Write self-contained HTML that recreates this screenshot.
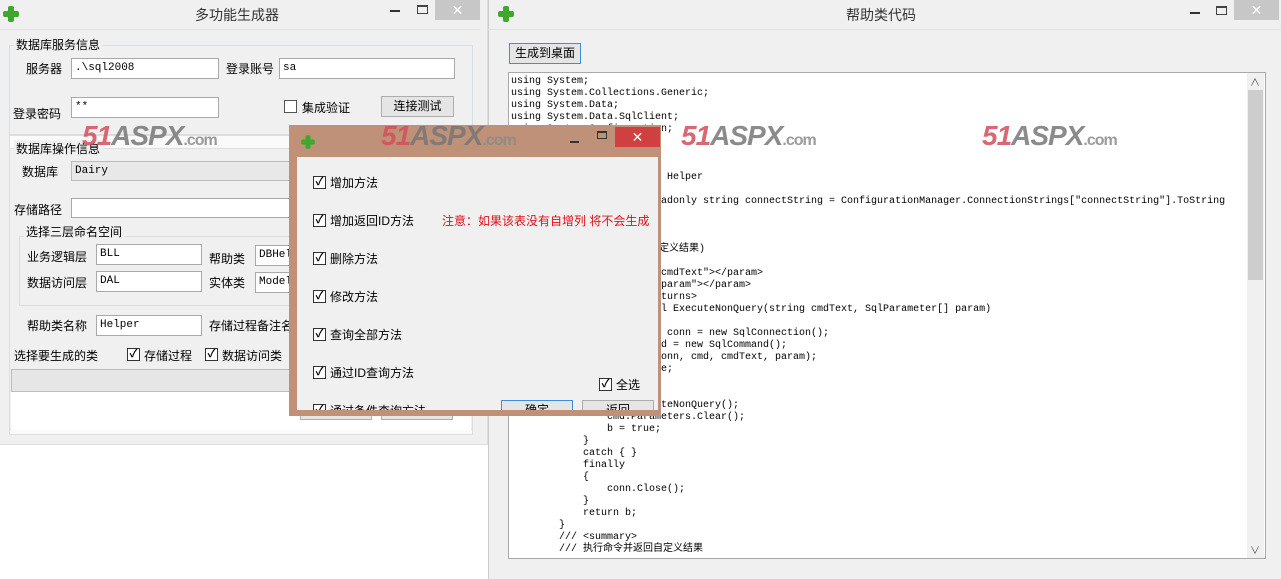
<!DOCTYPE html>
<html><head><meta charset="utf-8"><style>
*{margin:0;padding:0;box-sizing:border-box}
body{width:1281px;height:579px;overflow:hidden;background:#fff;position:relative;font-family:"Liberation Sans","Noto Sans CJK SC",sans-serif;font-size:12px;color:#000}
.a{position:absolute}
.tb{position:absolute;background:#fff;border:1px solid #a9a9a9;font-family:"Liberation Mono","Noto Sans CJK SC",monospace;font-size:11px;padding:0 3px;line-height:18px}
.btn{position:absolute;background:#e5e5e5;border:1px solid #adadad;text-align:center;line-height:18px}
.cb{position:absolute;width:13px;height:13px;border:1px solid #333;background:#fff;font-size:11px;line-height:11px;text-align:center;font-weight:bold}
.gb{position:absolute;border:1px solid #d5dfe5}
.gl{position:absolute;background:#f0f0f0;padding:0 2px}
.plus{position:absolute;width:16px;height:16px}
.plus:before{content:"";position:absolute;left:5px;top:0;width:6px;height:16px;background:#3fa72c;border-radius:2px}
.plus:after{content:"";position:absolute;left:0;top:5px;width:16px;height:6px;background:#3fa72c;border-radius:2px}
.wm{position:absolute;font-family:"Liberation Sans",sans-serif;font-weight:bold;font-style:italic;color:#d2505a;font-size:28px;letter-spacing:-1px;opacity:.85}
.wm span{color:#8a8a8a;font-size:16px;font-style:normal}
.wm b{color:#777}
pre{font-family:"Liberation Mono","Noto Sans CJK SC",monospace;font-size:10px;line-height:12px}
</style></head><body>

<!-- Left window -->
<div class="a" style="left:0;top:0;width:488px;height:445px;background:#f0f0f0;border-right:1px solid #ddd;border-bottom:1px solid #ddd"></div>
<div class="plus" style="left:3px;top:6px"></div>
<div class="a" style="left:195px;top:5px;font-size:14px;color:#333">多功能生成器</div>
<div class="a" style="left:390px;top:10px;width:10px;height:2px;background:#333"></div>
<div class="a" style="left:417px;top:5px;width:11px;height:9px;border:1px solid #444;border-top-width:2px"></div>
<div class="a" style="left:435px;top:0;width:45px;height:20px;background:#c7c7c7;color:#fff;text-align:center;font-size:14px;line-height:20px">✕</div>
<div class="a" style="left:0;top:29px;width:480px;height:1px;background:#e0e0e0"></div>
<div class="a" style="left:9px;top:135px;width:464px;height:300px;background:#fafafa;border:1px solid #ddd"></div>

<div class="gb" style="left:9px;top:45px;width:464px;height:90px"></div>
<div class="gl" style="left:14px;top:36px">数据库服务信息</div>
<div class="a" style="left:26px;top:60px">服务器</div>
<div class="tb" style="left:71px;top:58px;width:148px;height:21px">.\sql2008</div>
<div class="a" style="left:226px;top:60px">登录账号</div>
<div class="tb" style="left:279px;top:58px;width:176px;height:21px">sa</div>
<div class="a" style="left:13px;top:105px">登录密码</div>
<div class="tb" style="left:71px;top:97px;width:148px;height:21px">**</div>
<div class="cb" style="left:284px;top:100px;border-color:#555"></div>
<div class="a" style="left:302px;top:99px">集成验证</div>
<div class="btn" style="left:381px;top:96px;width:73px;height:21px">连接测试</div>

<div class="a" style="left:9px;top:148px;width:464px;height:282px;background:#f0f0f0;border:1px solid #ddd"></div>
<div class="gl" style="left:14px;top:140px">数据库操作信息</div>
<div class="a" style="left:22px;top:163px">数据库</div>
<div class="tb" style="left:71px;top:161px;width:230px;height:20px;background:#e8e8e8;border-color:#bbb">Dairy</div>
<div class="a" style="left:14px;top:201px">存储路径</div>
<div class="tb" style="left:71px;top:198px;width:230px;height:20px"></div>
<div class="gb" style="left:19px;top:236px;width:280px;height:70px;border-color:#ddd"></div>
<div class="gl" style="left:24px;top:223px">选择三层命名空间</div>
<div class="a" style="left:27px;top:248px">业务逻辑层</div>
<div class="tb" style="left:96px;top:244px;width:106px;height:21px">BLL</div>
<div class="a" style="left:209px;top:250px">帮助类</div>
<div class="tb" style="left:255px;top:245px;width:50px;height:21px">DBHel</div>
<div class="a" style="left:27px;top:274px">数据访问层</div>
<div class="tb" style="left:96px;top:271px;width:106px;height:21px">DAL</div>
<div class="a" style="left:209px;top:274px">实体类</div>
<div class="tb" style="left:255px;top:272px;width:50px;height:21px">Model</div>
<div class="a" style="left:27px;top:317px">帮助类名称</div>
<div class="tb" style="left:96px;top:315px;width:106px;height:21px">Helper</div>
<div class="a" style="left:209px;top:317px">存储过程备注名</div>
<div class="a" style="left:14px;top:347px">选择要生成的类</div>
<div class="cb" style="left:127px;top:348px">✓</div>
<div class="a" style="left:144px;top:347px">存储过程</div>
<div class="cb" style="left:205px;top:348px">✓</div>
<div class="a" style="left:222px;top:347px">数据访问类</div>
<div class="a" style="left:11px;top:369px;width:290px;height:23px;background:#e6e6e6;border:1px solid #bcbcbc"></div>
<div class="a" style="left:11px;top:392px;width:460px;height:38px;background:#fff"></div>
<div class="btn" style="left:300px;top:400px;width:72px;height:20px"></div>
<div class="btn" style="left:381px;top:400px;width:72px;height:20px"></div>

<!-- Right window -->
<div class="a" style="left:488px;top:0;width:793px;height:579px;background:#f0f0f0;border-left:1px solid #ccc"></div>
<div class="plus" style="left:498px;top:6px"></div>
<div class="a" style="left:846px;top:5px;font-size:14px;color:#333">帮助类代码</div>
<div class="a" style="left:1190px;top:12px;width:10px;height:2px;background:#333"></div>
<div class="a" style="left:1216px;top:6px;width:11px;height:9px;border:1px solid #444;border-top-width:2px"></div>
<div class="a" style="left:1234px;top:0;width:45px;height:20px;background:#c7c7c7;color:#fff;text-align:center;font-size:14px;line-height:20px">✕</div>
<div class="a" style="left:488px;top:29px;width:793px;height:1px;background:#e0e0e0"></div>
<div class="btn" style="left:509px;top:43px;width:72px;height:21px;border-color:#3c8fd8">生成到桌面</div>
<div class="a" style="left:508px;top:72px;width:758px;height:487px;background:#fff;border:1px solid #a9a9a9"></div>
<div class="a" style="left:1247px;top:73px;width:17px;height:485px;background:#f0f0f0"></div>
<div class="a" style="left:1248px;top:90px;width:15px;height:190px;background:#cdcdcd"></div>
<div class="a" style="left:1250px;top:74px;font-size:10px;color:#555">∧</div>
<div class="a" style="left:1250px;top:542px;font-size:10px;color:#555">∨</div>
<pre class="a" style="left:511px;top:76px">using System;
using System.Collections.Generic;
using System.Data;
using System.Data.SqlClient;
using System.Configuration;

namespace DAL
{
      public static class Helper
    {
        private static readonly string connectString = ConfigurationManager.ConnectionStrings["connectString"].ToString


        /// &lt;summary&gt;
        /// 执行命令(返回自定义结果)
        /// &lt;/summary&gt;
        /// &lt;param name="cmdText"&gt;&lt;/param&gt;
        /// &lt;param name="param"&gt;&lt;/param&gt;
        /// &lt;returns&gt;&lt;/returns&gt;
        public static bool ExecuteNonQuery(string cmdText, SqlParameter[] param)
        {
            SqlConnection conn = new SqlConnection();
            SqlCommand cmd = new SqlCommand();
            PrepareComm(conn, cmd, cmdText, param);
            bool b = false;
            try
            {
                cmd.ExecuteNonQuery();
                cmd.Parameters.Clear();
                b = true;
            }
            catch { }
            finally
            {
                conn.Close();
            }
            return b;
        }
        /// &lt;summary&gt;
        /// 执行命令并返回自定义结果</pre>

<!-- Dialog -->
<div class="a" style="left:289px;top:125px;width:372px;height:291px;background:#bf9178"></div>
<div class="plus" style="left:300px;top:134px;transform:scale(.85)"></div>
<div class="a" style="left:570px;top:141px;width:9px;height:2px;background:#333"></div>
<div class="a" style="left:597px;top:131px;width:10px;height:8px;border:1px solid #333;border-top-width:2px"></div>
<div class="a" style="left:615px;top:127px;width:45px;height:20px;background:#d04040;color:#fff;text-align:center;font-size:14px;line-height:20px">✕</div>
<div class="a" style="left:297px;top:157px;width:361px;height:253px;background:#f0f0f0;overflow:hidden">
  <div class="cb" style="left:16px;top:19px">✓</div><div class="a" style="left:33px;top:17px">增加方法</div>
  <div class="cb" style="left:16px;top:57px">✓</div><div class="a" style="left:33px;top:55px">增加返回ID方法</div>
  <div class="a" style="left:145px;top:55px;color:#e0101a">注意：如果该表没有自增列 将不会生成</div>
  <div class="cb" style="left:16px;top:95px">✓</div><div class="a" style="left:33px;top:93px">删除方法</div>
  <div class="cb" style="left:16px;top:133px">✓</div><div class="a" style="left:33px;top:131px">修改方法</div>
  <div class="cb" style="left:16px;top:171px">✓</div><div class="a" style="left:33px;top:169px">查询全部方法</div>
  <div class="cb" style="left:16px;top:209px">✓</div><div class="a" style="left:33px;top:207px">通过ID查询方法</div>
  <div class="cb" style="left:16px;top:247px">✓</div><div class="a" style="left:33px;top:245px">通过条件查询方法</div>
  <div class="cb" style="left:302px;top:221px">✓</div><div class="a" style="left:319px;top:219px">全选</div>
  <div class="btn" style="left:204px;top:243px;width:72px;height:22px;border-color:#3c8fd8">确定</div>
  <div class="btn" style="left:285px;top:243px;width:72px;height:22px">返回</div>
</div>

<!-- watermarks -->
<div class="wm" style="left:82px;top:120px">51<b>ASPX</b><span>.com</span></div>
<div class="wm" style="left:381px;top:120px">51<b>ASPX</b><span>.com</span></div>
<div class="wm" style="left:681px;top:120px">51<b>ASPX</b><span>.com</span></div>
<div class="wm" style="left:982px;top:120px">51<b>ASPX</b><span>.com</span></div>
</body></html>
